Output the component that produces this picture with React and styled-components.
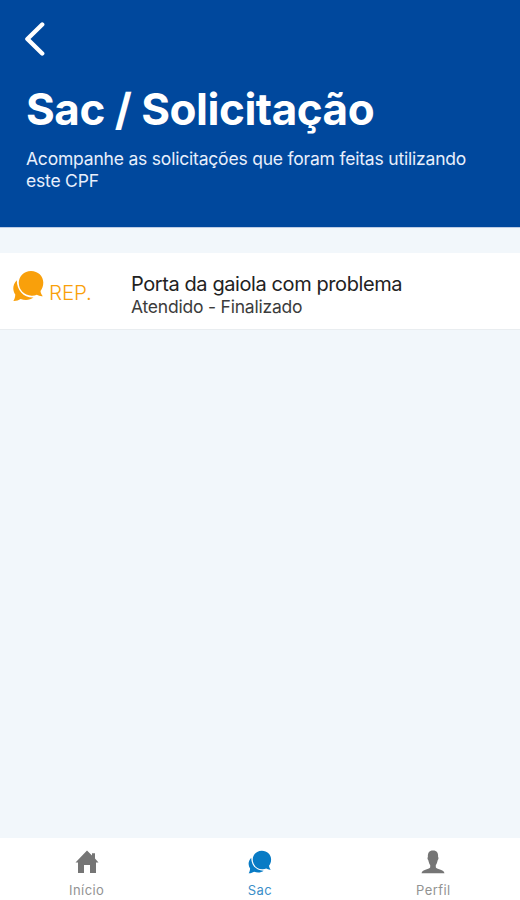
import React from "react";
import styled, { createGlobalStyle } from "styled-components";

const GlobalStyle = createGlobalStyle`
  * { box-sizing: border-box; }
  body { margin: 0; font-family: Inter, "Liberation Sans", sans-serif; }
  h1, p { margin: 0; }
  svg { display: block; }
`;

const Screen = styled.div`
  width: 520px;
  height: 900px;
  display: flex;
  flex-direction: column;
  overflow: hidden;
  background: #f2f7fb;
`;

const Header = styled.header`
  height: 228px;
  flex: none;
  padding: 21px 26px 0;
  background: #00489d;
  border-bottom: 1px solid #bccce5;
  color: #fff;
`;

const BackButton = styled.button`
  display: block;
  width: 22px;
  height: 36px;
  margin-left: -3px;
  padding: 0;
  border: 0;
  background: none;
`;

const Title = styled.h1`
  margin-top: 26px;
  font-size: 44px;
  line-height: 52px;
  font-weight: 700;
  letter-spacing: -0.48px;
  white-space: nowrap;
`;

const Description = styled.p`
  margin-top: 13px;
  color: #e8effc;
  font-size: 17.5px;
  line-height: 21.5px;
  letter-spacing: -0.2px;
  white-space: nowrap;
`;

const List = styled.main`
  flex: 1;
  padding-top: 25px;
`;

const Request = styled.article`
  display: flex;
  height: 77px;
  background: #fff;
  border-bottom: 1px solid #e9edf0;
`;

const Category = styled.div`
  display: flex;
  width: 131px;
  padding: 17px 0 0 12px;
  color: #f9a00b;
`;

const CategoryName = styled.span`
  margin: 11px 0 0 4px;
  font-size: 20.5px;
  line-height: 24px;
  font-weight: 300;
  letter-spacing: -0.1px;
`;

const Details = styled.div`
  padding-top: 19px;
  color: #222;
  white-space: nowrap;
`;

const RequestTitle = styled.p`
  font-size: 20px;
  line-height: 24px;
  letter-spacing: -0.41px;
`;

const RequestStatus = styled.p`
  font-size: 17.5px;
  line-height: 22px;
  letter-spacing: -0.21px;
  color: #3c3c3c;
`;

const TabBar = styled.nav`
  display: grid;
  grid-template-columns: repeat(3, 1fr);
  height: 62px;
  flex: none;
  background: #fff;
`;

const Tab = styled.button`
  display: flex;
  flex-direction: column;
  align-items: center;
  padding: 12px 0 0;
  border: 0;
  background: none;
  font: 400 13px/16px Inter, "Liberation Sans", sans-serif;
  letter-spacing: 0.4px;
  color: ${({ $active }) => ($active ? "#3b8fc9" : "#929292")};
  svg { color: ${({ $active }) => ($active ? "#087bc5" : "#757575")}; }
`;

const TabLabel = styled.span`
  margin-top: 8px;
`;

const ChatIcon = ({ width, height }) => (
  <svg width={width} height={height} viewBox="0 0 33 32" fill="currentColor">
    <path d="M19 1C26 1 31.3 6 31.3 12.5c0 3.6-1.1 6.3-2.8 8.5.2 2 1 3.8 2.3 5.2-2.3.2-4.2-.3-6-1.4-1.7.7-3.3 1.1-5.2 1C12.1 25.3 6.8 19.8 6.8 12.8 6.8 6.2 12 1 19 1Z" />
    <path d="M4.8 10.3C2.3 12.8 1.2 15.8 1.3 18.6c.1 2.3.8 4.3 2 6-.1 2.5-.7 4.4-1.9 6.4 3 .1 5.2-.7 7.2-2 4.8 1.8 9.6 1.1 12.9-1.4C11.7 28 4.7 20.2 4.8 10.3Z" />
  </svg>
);

const HomeIcon = () => (
  <svg width="24" height="24" viewBox="0 0 24 24" fill="currentColor">
    <path d="M12 .5 17 5.5V3.3h3v5.2l3.5 4H21V23h-6v-8H9v8H3V12.5H.5L12 .5Z" />
  </svg>
);

const PersonIcon = () => (
  <svg width="24" height="24" viewBox="0 0 24 24" fill="currentColor">
    <path d="M12 .6c4 0 5.4 2.7 5.1 6.5.8.5.4 2.6-.5 3.4-.3 1.9-.9 3.5-1.8 4.5v2.3c0 .9 1.3 1.4 3.4 2 3 .8 4.8 1.7 5.3 3.9H.5c.5-2.2 2.3-3.1 5.3-3.9 2.1-.6 3.4-1.1 3.4-2V15c-.9-1-1.5-2.6-1.8-4.5-.9-.8-1.3-2.9-.5-3.4C6.6 3.3 8 .6 12 .6Z" />
  </svg>
);

export default function App() {
  return (
    <>
      <GlobalStyle />
      <Screen>
        <Header>
          <BackButton aria-label="Voltar">
            <svg width="22" height="36" viewBox="0 0 22 36" fill="none" stroke="#fff" strokeWidth="4.4" strokeLinecap="round" strokeLinejoin="round">
              <path d="M19.2 3.5 4.4 18l14.8 14.5" />
            </svg>
          </BackButton>
          <Title>Sac / Solicitação</Title>
          <Description>
            Acompanhe as solicitações que foram feitas utilizando
            <br />
            este CPF
          </Description>
        </Header>
        <List>
          <Request>
            <Category>
              <ChatIcon width={33} height={32} />
              <CategoryName>REP.</CategoryName>
            </Category>
            <Details>
              <RequestTitle>Porta da gaiola com problema</RequestTitle>
              <RequestStatus>Atendido - Finalizado</RequestStatus>
            </Details>
          </Request>
        </List>
        <TabBar>
          <Tab>
            <HomeIcon />
            <TabLabel>Início</TabLabel>
          </Tab>
          <Tab $active>
            <ChatIcon width={26} height={24} />
            <TabLabel>Sac</TabLabel>
          </Tab>
          <Tab>
            <PersonIcon />
            <TabLabel>Perfil</TabLabel>
          </Tab>
        </TabBar>
      </Screen>
    </>
  );
}
